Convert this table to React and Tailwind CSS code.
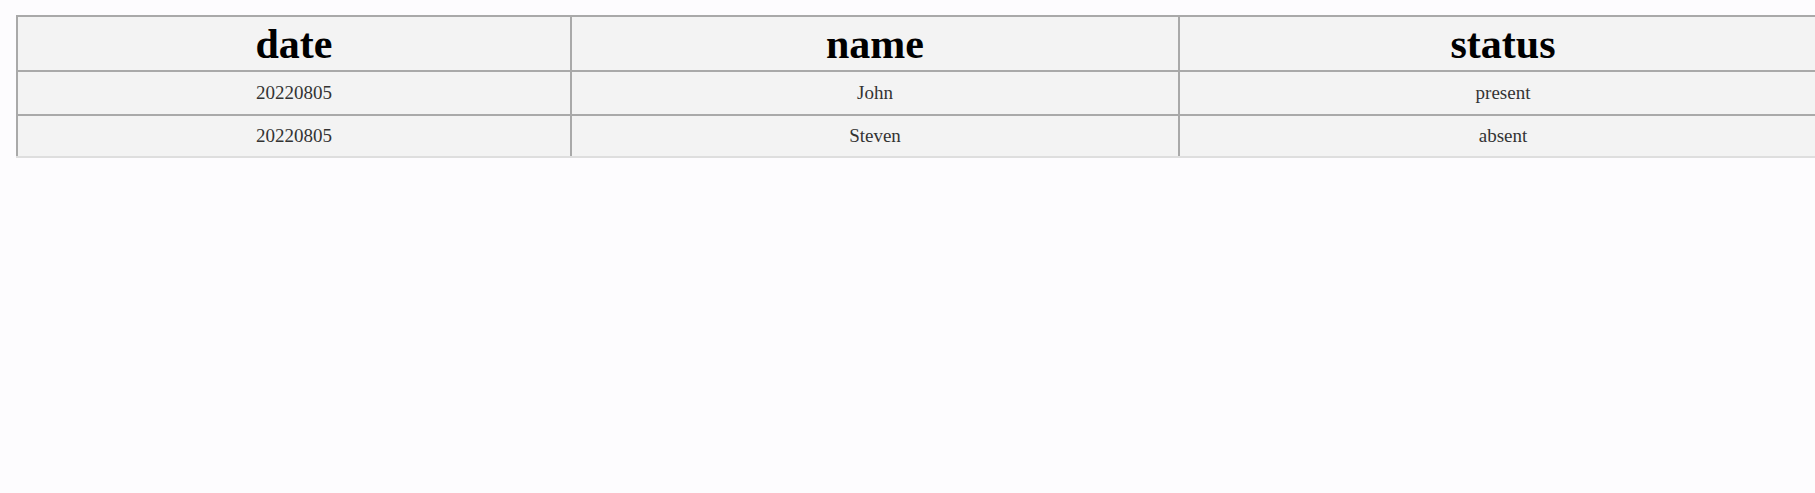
import React from 'react';

const rows = [
  { date: '20220805', name: 'John', status: 'present' },
  { date: '20220805', name: 'Steven', status: 'absent' }
];

function App() {
  return (
    <div className="min-h-[493px] bg-[#fdfcfe] pt-[15px] pl-[16px] overflow-hidden" style={{ fontFamily: '"Liberation Serif", "Times New Roman", serif' }}>
      <table className="w-[1810px] table-fixed border-collapse bg-[#f3f3f3]">
        <colgroup>
          <col className="w-[554px]" />
          <col className="w-[608px]" />
          <col className="w-[648px]" />
        </colgroup>
        <thead>
          <tr className="h-[55px]">
            <th className="border-2 border-[#a9a9a9] text-[42px] leading-none font-bold text-black text-center">date</th>
            <th className="border-2 border-[#a9a9a9] text-[42px] leading-none font-bold text-black text-center">name</th>
            <th className="border-2 border-[#a9a9a9] text-[42px] leading-none font-bold text-black text-center">status</th>
          </tr>
        </thead>
        <tbody>
          {rows.map((row, i) => {
            const last = i === rows.length - 1;
            const cell = last
              ? 'border-2 border-[#a9a9a9] border-b-[#dedede] text-[19px] text-[#333] text-center'
              : 'border-2 border-[#a9a9a9] text-[19px] text-[#333] text-center';
            return (
              <tr key={i} className={i === 0 ? 'h-[44px]' : 'h-[42px]'}>
                <td className={cell}>{row.date}</td>
                <td className={cell}>{row.name}</td>
                <td className={cell}>{row.status}</td>
              </tr>
            );
          })}
        </tbody>
      </table>
    </div>
  );
}

export default App;
